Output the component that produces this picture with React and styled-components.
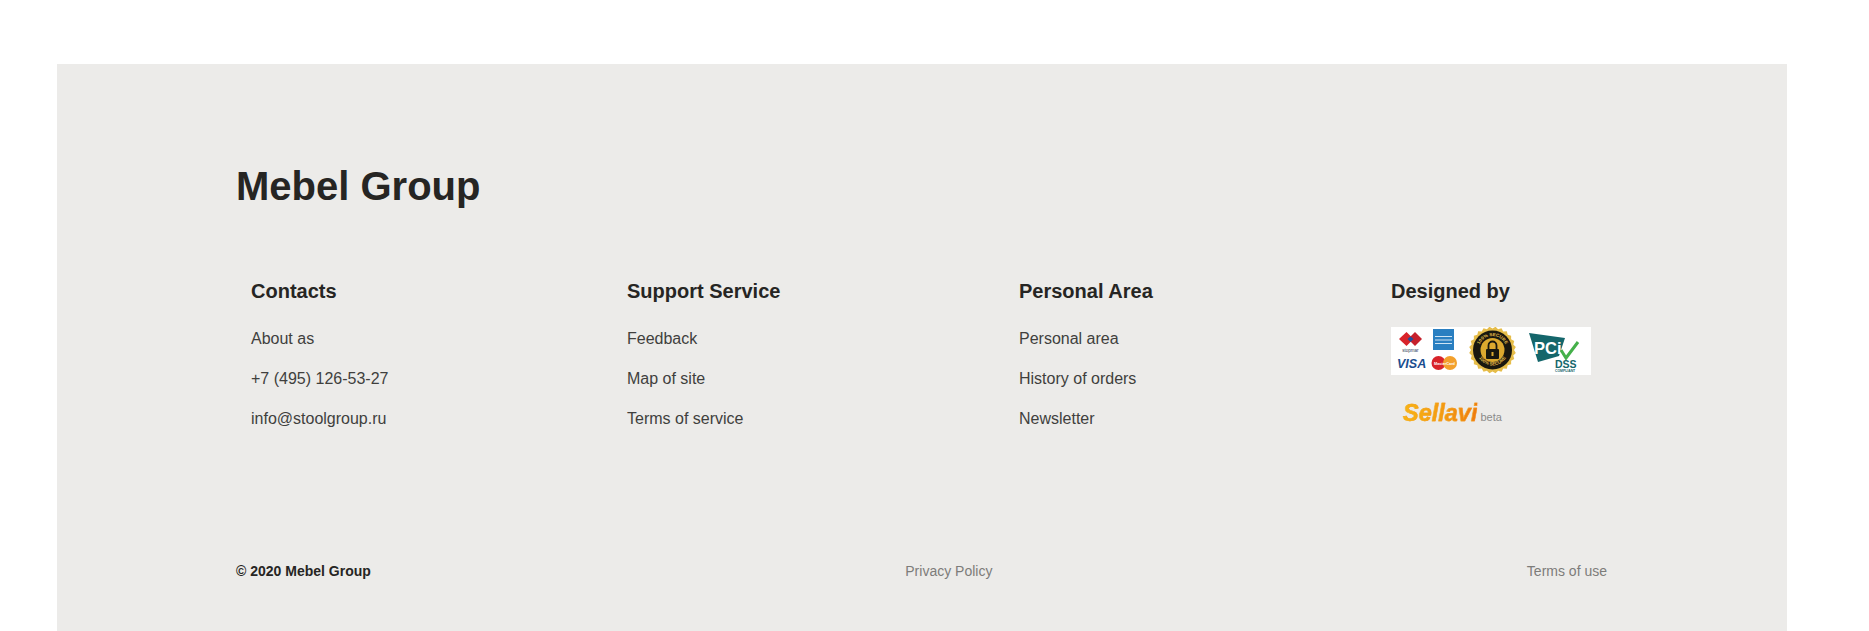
import React from "react";
import styled, { createGlobalStyle } from "styled-components";

const Global = createGlobalStyle`
  html, body { margin: 0; padding: 0; background: #fff; }
  body { font-family: "Liberation Sans", Arial, sans-serif; overflow: hidden; }
  a { text-decoration: none; color: inherit; }
`;
const Page = styled.div`
  padding: 64px 82px 0 57px;
  height: 631px;
  box-sizing: border-box;
  overflow: hidden;
`;
const Footer = styled.footer`
  background: #ecebe9;
  height: 567px;
  padding: 99px 180px 0 179px;
  box-sizing: border-box;
  color: #262523;
`;
const Brand = styled.h2`
  margin: 0;
  font-size: 40px;
  line-height: 46px;
  font-weight: 700;
`;
const Columns = styled.div`
  display: grid;
  grid-template-columns: 376px 392px 372px 1fr;
  padding: 70px 0 0 15px;
  height: 352px;
  box-sizing: border-box;
`;
const Column = styled.div`
  display: flex;
  flex-direction: column;
  align-items: flex-start;
`;
const Heading = styled.h3`
  margin: 0 0 16px;
  font-size: 20px;
  line-height: 24px;
  font-weight: 700;
`;
const LinkItem = styled.a`
  font-size: 16px;
  line-height: 40px;
  color: #403f3d;
`;
const Badges = styled.svg`
  display: block;
  width: 200px;
  height: 48px;
  margin-top: 8px;
  background: #fff;
`;
const Sellavi = styled.div`
  display: flex;
  align-items: baseline;
  gap: 3px;
  margin: 25px 0 0 12px;
`;
const SellaviName = styled.span`
  font-size: 23.5px;
  line-height: 26px;
  font-weight: 700;
  font-style: italic;
  background: linear-gradient(90deg, #f8b514, #f39a12 55%, #ee7a10);
  -webkit-background-clip: text;
  background-clip: text;
  color: transparent;
  -webkit-text-stroke: 0.4px #f5a015;
`;
const SellaviBeta = styled.span`
  font-size: 11px;
  color: #8a8a8a;
`;
const BottomBar = styled.div`
  display: flex;
  justify-content: space-between;
  align-items: center;
  line-height: 20px;
`;
const Copyright = styled.span`
  font-size: 14px;
  font-weight: 700;
`;
const BottomLink = styled.a`
  font-size: 14px;
  color: #7d7c7a;
`;

const sealPoints = Array.from({ length: 48 }, (_, i) => {
  const r = i % 2 ? 23.5 : 21.5;
  const a = (i * Math.PI) / 24;
  return `${(101.5 + r * Math.cos(a)).toFixed(2)},${(23 + r * Math.sin(a)).toFixed(2)}`;
}).join(" ");

const BadgeArt = () => (
  <Badges viewBox="0 0 200 48">
    <defs>
      <path id="sealTop" d="M87.5 23 a14 14 0 0 1 28 0" />
      <path id="sealBottom" d="M86 23 a15.5 15.5 0 0 0 31 0" />
    </defs>
    <path d="M8 12 L15.5 5 L22.5 12 L15.5 19 Z" fill="#d8232a" />
    <path d="M17 12 L24 5 L31 12 L24 19 Z" fill="#c6202c" />
    <path d="M19.5 9.5 L22.5 12 L19.5 15 L16.5 12 Z" fill="#1f4e9c" />
    <text x="19.5" y="24.5" fontSize="4.5" textAnchor="middle" fill="#2a3a55" fontFamily="Liberation Sans">stopmar</text>
    <rect x="42" y="2" width="21" height="21" fill="#2a7fc1" />
    <path d="M44 9.5h17M44 13h17M44 16.5h17" stroke="#cfe4f4" strokeWidth="1.2" />
    <text x="6" y="40.5" fontSize="12.5" fontWeight="700" fontStyle="italic" fill="#1a4d8f" fontFamily="Liberation Sans">VISA</text>
    <circle cx="47.500" cy="36" r="7" fill="#d8232a" />
    <circle cx="59" cy="36" r="7" fill="#f3a02c" />
    <text x="53.500" y="37.500" fontSize="3.800" fontWeight="700" textAnchor="middle" fill="#fff" fontFamily="Liberation Sans">MasterCard</text>
    <polygon points={sealPoints} fill="#e6bd4a" />
    <circle cx="101.5" cy="23" r="19.5" fill="#19180f" />
    <circle cx="101.5" cy="23" r="12" fill="#dca92f" />
    <text fontSize="4.6" fontWeight="700" fill="#e6bd4a" fontFamily="Liberation Sans">
      <textPath href="#sealTop" startOffset="50%" textAnchor="middle">100% SECURE</textPath>
    </text>
    <text fontSize="4.6" fontWeight="700" fill="#e6bd4a" fontFamily="Liberation Sans">
      <textPath href="#sealBottom" startOffset="50%" textAnchor="middle">100% SECURE</textPath>
    </text>
    <rect x="95" y="22" width="13" height="10" rx="1" fill="#19180f" />
    <path d="M97.5 22v-3.500a4 4 0 0 1 8 0v3.500" fill="none" stroke="#19180f" strokeWidth="1.800" />
    <rect x="100.500" y="25" width="2" height="4" fill="#dca92f" />
    <path d="M138 6 L174 11 L168 29 L147 35 Z" fill="#14666b" />
    <text x="143" y="27" fontSize="16.5" fontWeight="700" fill="#fff" fontFamily="Liberation Sans">PCi</text>
    <path d="M170 23 L175 31 L187 15" fill="none" stroke="#45b04a" strokeWidth="3" />
    <text x="164" y="40.500" fontSize="10.500" fontWeight="700" fill="#14666b" fontFamily="Liberation Sans">DSS</text>
    <text x="164" y="45" fontSize="3.400" fontWeight="700" fill="#14666b" fontFamily="Liberation Sans">COMPLIANT</text>
  </Badges>
);

const columns = [
  { title: "Contacts", links: ["About as", "+7 (495) 126-53-27", "info@stoolgroup.ru"] },
  { title: "Support Service", links: ["Feedback", "Map of site", "Terms of service"] },
  { title: "Personal Area", links: ["Personal area", "History of orders", "Newsletter"] },
];

export default function App() {
  return (
    <Page>
      <Global />
      <Footer>
        <Brand>Mebel Group</Brand>
        <Columns>
          {columns.map((c) => (
            <Column key={c.title}>
              <Heading>{c.title}</Heading>
              {c.links.map((l) => (
                <LinkItem key={l} href="#">{l}</LinkItem>
              ))}
            </Column>
          ))}
          <Column>
            <Heading>Designed by</Heading>
            <BadgeArt />
            <Sellavi>
              <SellaviName>Sellavi</SellaviName>
              <SellaviBeta>beta</SellaviBeta>
            </Sellavi>
          </Column>
        </Columns>
        <BottomBar>
          <Copyright>© 2020 Mebel Group</Copyright>
          <BottomLink href="#">Privacy Policy</BottomLink>
          <BottomLink href="#">Terms of use</BottomLink>
        </BottomBar>
      </Footer>
    </Page>
  );
}
